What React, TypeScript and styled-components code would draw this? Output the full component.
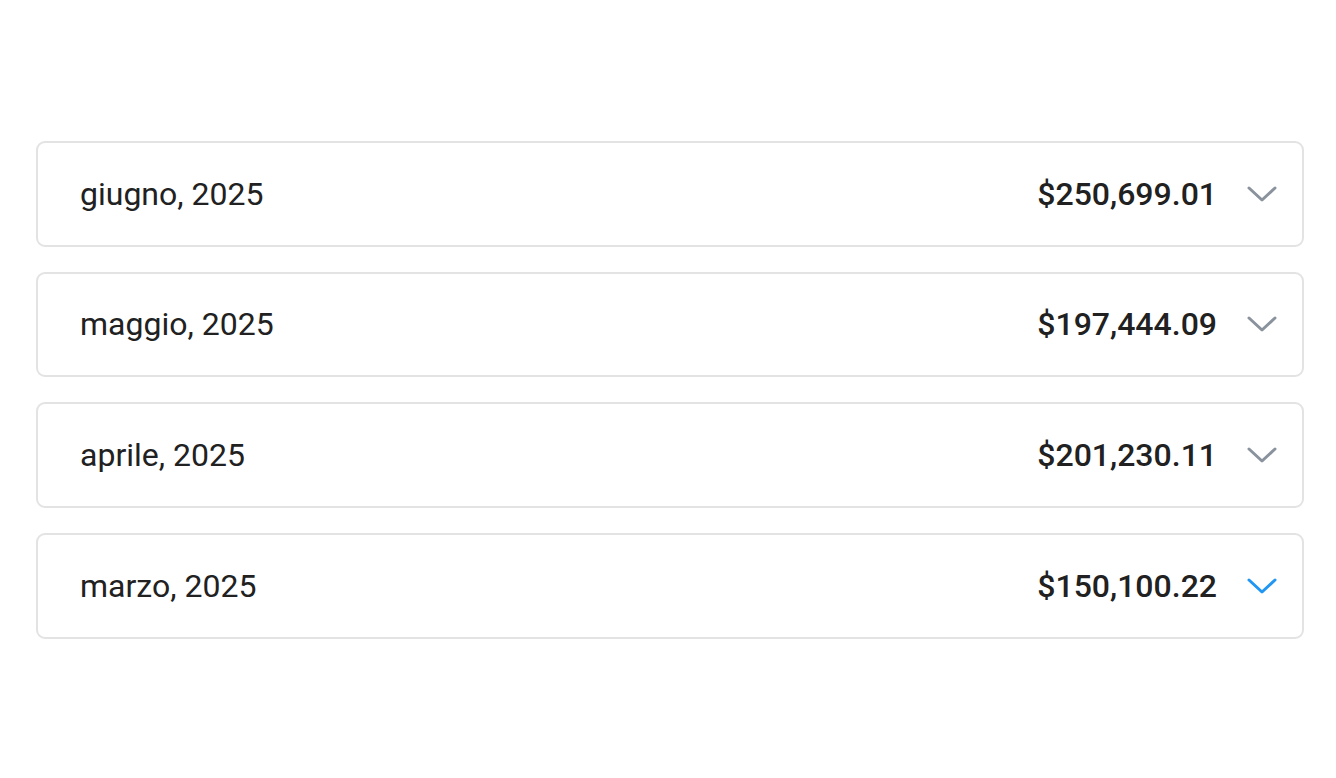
import React from 'react'
import styled, { createGlobalStyle } from 'styled-components'

const GlobalStyle = createGlobalStyle`
  body {
    margin: 0;
    background: #ffffff;
    font-family: Roboto, 'Noto Sans', sans-serif;
  }
`

const Page = styled.div`
  padding: 141px 32px 0 36px;
  display: flex;
  flex-direction: column;
  gap: 25.2px;
`

const Card = styled.div`
  height: 101.5px;
  border: 2px solid #e3e3e3;
  border-radius: 9px;
  display: flex;
  align-items: center;
  padding: 0 24px 0 42px;
  background: #fff;
`

const Month = styled.span`
  flex: 1;
  font-size: 32px;
  color: #212121;
`

const Amount = styled.span`
  font-size: 32px;
  font-weight: 500;
  color: #212121;
`

const Chevron = styled.svg<{ $active?: boolean }>`
  margin-left: 29px;
  width: 32px;
  height: 32px;
  color: ${(p) => (p.$active ? '#2196f3' : '#8a929d')};
`

const rows = [
  { month: 'giugno, 2025', amount: '$250,699.01' },
  { month: 'maggio, 2025', amount: '$197,444.09' },
  { month: 'aprile, 2025', amount: '$201,230.11' },
  { month: 'marzo, 2025', amount: '$150,100.22', active: true },
]

const App = () => {
  return (
    <>
      <GlobalStyle />
      <Page>
        {rows.map((r) => (
          <Card key={r.month}>
            <Month>{r.month}</Month>
            <Amount>{r.amount}</Amount>
            <Chevron $active={r.active} viewBox="0 0 32 32" fill="none">
              <path d="M3 10l13 12 13-12" stroke="currentColor" strokeWidth="3" strokeLinecap="round" strokeLinejoin="round" />
            </Chevron>
          </Card>
        ))}
      </Page>
    </>
  )
}

export default App
